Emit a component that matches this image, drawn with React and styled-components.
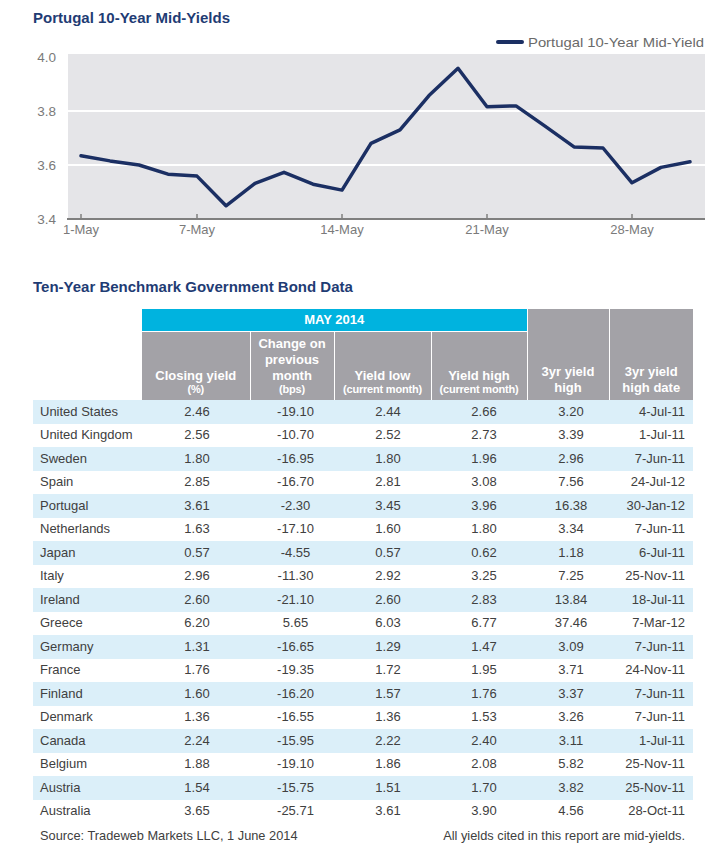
import React from "react";
import styled, { createGlobalStyle } from "styled-components";

const Global = createGlobalStyle`
  html, body { margin: 0; padding: 0; background: #ffffff; }
  body { font-family: "Liberation Sans", Arial, sans-serif; }
`;

const Page = styled.div`
  width: 722px;
  height: 861px;
  background: #fff;
  overflow: hidden;
`;

const SectionTitle = styled.h2`
  margin: 0;
  padding: ${(p) => p.$top}px 0 0 33px;
  font-size: 15px;
  line-height: 18px;
  font-weight: bold;
  color: #1f3c74;
  letter-spacing: 0;
`;

const ChartSvg = styled.svg`
  display: block;
  width: 722px;
  height: 210px;
`;

const Table = styled.table`
  margin: 13px 0 0 33px;
  width: 660px;
  border-collapse: collapse;
  table-layout: fixed;
  font-size: 13px;
  color: #404040;
`;

const HeadCell = styled.th`
  box-sizing: border-box;
  padding: 0 0 ${(p) => p.$padBottom ?? 4}px;
  background: ${(p) => (p.$tone === "cyan" ? "#00b3df" : p.$tone === "grey" ? "#a3a2a7" : "transparent")};
  color: #fff;
  font-weight: bold;
  font-size: 13px;
  line-height: 16px;
  text-align: center;
  vertical-align: ${(p) => (p.$tone === "cyan" ? "middle" : "bottom")};
  height: ${(p) => p.$h}px;
  border-left: ${(p) => (p.$noLeft ? "none" : "1px solid #fff")};
  border-bottom: ${(p) => (p.$tone === "cyan" ? "1px solid #fff" : "none")};
`;

const HeadRow = styled.tr`
  height: ${(p) => p.$h}px;
`;

const Sub = styled.span`
  display: block;
  font-size: 11px;
  line-height: 11px;
  font-weight: bold;
  letter-spacing: -0.2px;
`;

const Row = styled.tr`
  background: ${(p) => (p.$band ? "#dbeff9" : "#ffffff")};
`;

const Cell = styled.td`
  height: 23.5px;
  padding: 0 ${(p) => p.$padRight ?? 0}px 0 ${(p) => p.$padLeft ?? 0}px;
  text-align: ${(p) => p.$align || "center"};
  vertical-align: middle;
  line-height: 16px;
  white-space: nowrap;
`;

const Footer = styled.div`
  margin: 4px 0 0 33px;
  width: 660px;
  box-sizing: border-box;
  padding: 0 8px 0 7px;
  display: flex;
  justify-content: space-between;
  font-size: 12.8px;
  line-height: 18px;
  color: #404040;
`;

const series = [
  3.634, 3.615, 3.6, 3.566, 3.559, 3.449, 3.532, 3.573, 3.529, 3.507, 3.68,
  3.73, 3.857, 3.958, 3.816, 3.819, 3.744, 3.667, 3.663, 3.534, 3.591, 3.612,
];

const X0 = 81;
const DX = 29;
const yOf = (v) => 219 - (v - 3.4) * 270;

const xLabels = [
  { i: 0, t: "1-May" },
  { i: 4, t: "7-May" },
  { i: 9, t: "14-May" },
  { i: 14, t: "21-May" },
  { i: 19, t: "28-May" },
];

const yLabels = [
  { v: "4.0", y: 57 },
  { v: "3.8", y: 111 },
  { v: "3.6", y: 165 },
  { v: "3.4", y: 219 },
];

function Chart() {
  const pts = series.map((v, i) => `${X0 + i * DX},${yOf(v).toFixed(1)}`).join(" ");
  return (
    <ChartSvg viewBox="0 27 722 210">
      <rect x="68" y="54" width="637" height="165" fill="#e5e5e8" />
      <line x1="68" x2="705" y1="111" y2="111" stroke="#fff" strokeWidth="2" />
      <line x1="68" x2="705" y1="165" y2="165" stroke="#fff" strokeWidth="2" />
      <line x1="67" x2="705" y1="219" y2="219" stroke="#7f7f7f" strokeWidth="2" />
      {xLabels.map((l) => (
        <line
          key={l.t}
          x1={X0 + l.i * DX}
          x2={X0 + l.i * DX}
          y1="214"
          y2="219"
          stroke="#7f7f7f"
          strokeWidth="1.5"
        />
      ))}
      {yLabels.map((l) => (
        <text
          key={l.v}
          x="56"
          y={l.y + 4.5}
          textAnchor="end"
          fontSize="13.5"
          fill="#7a7a7a"
          fontFamily="Liberation Sans, Arial, sans-serif"
        >
          {l.v}
        </text>
      ))}
      {xLabels.map((l) => (
        <text
          key={l.t}
          x={X0 + l.i * DX}
          y="233.5"
          textAnchor="middle"
          fontSize="13"
          fill="#7a7a7a"
          fontFamily="Liberation Sans, Arial, sans-serif"
        >
          {l.t}
        </text>
      ))}
      <polyline
        points={pts}
        fill="none"
        stroke="#1b2f63"
        strokeWidth="3.5"
        strokeLinejoin="round"
        strokeLinecap="round"
      />
      <line x1="498" x2="522" y1="42" y2="42" stroke="#1b2f63" strokeWidth="4" strokeLinecap="round" />
      <text
        x="528"
        y="46.5"
        fontSize="13.5"
        fill="#6a6a6a"
        textLength="176"
        lengthAdjust="spacingAndGlyphs"
        fontFamily="Liberation Sans, Arial, sans-serif"
      >
        Portugal 10-Year Mid-Yield
      </text>
    </ChartSvg>
  );
}

const rows = [
  ["United States", "2.46", "-19.10", "2.44", "2.66", "3.20", "4-Jul-11"],
  ["United Kingdom", "2.56", "-10.70", "2.52", "2.73", "3.39", "1-Jul-11"],
  ["Sweden", "1.80", "-16.95", "1.80", "1.96", "2.96", "7-Jun-11"],
  ["Spain", "2.85", "-16.70", "2.81", "3.08", "7.56", "24-Jul-12"],
  ["Portugal", "3.61", "-2.30", "3.45", "3.96", "16.38", "30-Jan-12"],
  ["Netherlands", "1.63", "-17.10", "1.60", "1.80", "3.34", "7-Jun-11"],
  ["Japan", "0.57", "-4.55", "0.57", "0.62", "1.18", "6-Jul-11"],
  ["Italy", "2.96", "-11.30", "2.92", "3.25", "7.25", "25-Nov-11"],
  ["Ireland", "2.60", "-21.10", "2.60", "2.83", "13.84", "18-Jul-11"],
  ["Greece", "6.20", "5.65", "6.03", "6.77", "37.46", "7-Mar-12"],
  ["Germany", "1.31", "-16.65", "1.29", "1.47", "3.09", "7-Jun-11"],
  ["France", "1.76", "-19.35", "1.72", "1.95", "3.71", "24-Nov-11"],
  ["Finland", "1.60", "-16.20", "1.57", "1.76", "3.37", "7-Jun-11"],
  ["Denmark", "1.36", "-16.55", "1.36", "1.53", "3.26", "7-Jun-11"],
  ["Canada", "2.24", "-15.95", "2.22", "2.40", "3.11", "1-Jul-11"],
  ["Belgium", "1.88", "-19.10", "1.86", "2.08", "5.82", "25-Nov-11"],
  ["Austria", "1.54", "-15.75", "1.51", "1.70", "3.82", "25-Nov-11"],
  ["Australia", "3.65", "-25.71", "3.61", "3.90", "4.56", "28-Oct-11"],
];

const colPad = [0, 2, 7, 11, 10, 6];

export default function App() {
  return (
    <Page>
      <Global />
      <SectionTitle $top={9}>Portugal 10-Year Mid-Yields</SectionTitle>
      <Chart />
      <SectionTitle $top={41}>Ten-Year Benchmark Government Bond Data</SectionTitle>
      <Table>
        <colgroup>
          <col style={{ width: 109 }} />
          <col style={{ width: 108 }} />
          <col style={{ width: 84 }} />
          <col style={{ width: 97 }} />
          <col style={{ width: 96 }} />
          <col style={{ width: 82 }} />
          <col style={{ width: 84 }} />
        </colgroup>
        <thead>
          <HeadRow $h={22}>
            <HeadCell rowSpan={2} $noLeft $h={0} />
            <HeadCell colSpan={4} $tone="cyan" $noLeft $h={22} $padBottom={0}>
              MAY 2014
            </HeadCell>
            <HeadCell rowSpan={2} $tone="grey" $h={0}>
              3yr yield
              <br />
              high
            </HeadCell>
            <HeadCell rowSpan={2} $tone="grey" $h={0}>
              3yr yield
              <br />
              high date
            </HeadCell>
          </HeadRow>
          <HeadRow $h={69}>
            <HeadCell $tone="grey" $noLeft $h={69} $padBottom={5}>
              Closing yield
              <Sub>(%)</Sub>
            </HeadCell>
            <HeadCell $tone="grey" $h={69} $padBottom={5}>
              Change on
              <br />
              previous
              <br />
              month
              <Sub>(bps)</Sub>
            </HeadCell>
            <HeadCell $tone="grey" $h={69} $padBottom={5}>
              Yield low
              <Sub>(current month)</Sub>
            </HeadCell>
            <HeadCell $tone="grey" $h={69} $padBottom={5}>
              Yield high
              <Sub>(current month)</Sub>
            </HeadCell>
          </HeadRow>
        </thead>
        <tbody>
          {rows.map((r, i) => (
            <Row key={r[0]} $band={i % 2 === 0}>
              <Cell $align="left" $padLeft={7}>
                {r[0]}
              </Cell>
              {r.slice(1, 6).map((v, j) => (
                <Cell key={j} $padLeft={colPad[j + 1]}>
                  {v}
                </Cell>
              ))}
              <Cell $align="right" $padRight={8}>
                {r[6]}
              </Cell>
            </Row>
          ))}
        </tbody>
      </Table>
      <Footer>
        <span>Source: Tradeweb Markets LLC, 1 June 2014</span>
        <span>All yields cited in this report are mid-yields.</span>
      </Footer>
    </Page>
  );
}
